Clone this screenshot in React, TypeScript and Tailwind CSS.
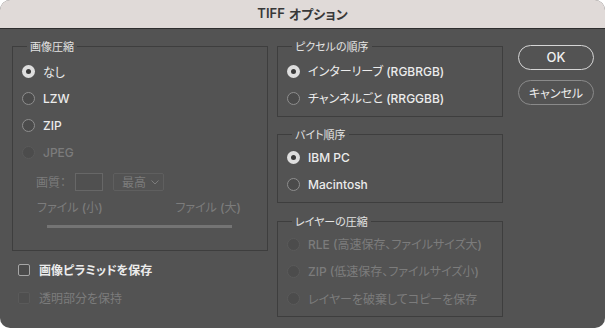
import React from "react";

type RadioState = "on" | "off" | "disabled";

// Latin runs are set in Inter medium, Japanese runs in Noto Sans CJK JP with proportional kana
function Label({ text, className }: { text: string; className?: string }) {
  const parts = text.split(/([A-Za-z0-9 ()]+)/).filter((p) => p !== "");
  return (
    <span className={"whitespace-nowrap " + (className ?? "")}>
      {parts.map((p, i) =>
        /^[A-Za-z0-9 ()]+$/.test(p) ? (
          <span key={i} className="font-['Inter',sans-serif] text-[12px] font-medium">
            {p}
          </span>
        ) : (
          <span key={i}>{p}</span>
        )
      )}
    </span>
  );
}

function Radio({ state, label }: { state: RadioState; label: string }) {
  return (
    <div className="flex h-[27px] items-center gap-[8px]">
      {state === "on" && (
        <span className="flex h-[13px] w-[13px] shrink-0 items-center justify-center rounded-full bg-[#dedede]">
          <span className="h-[5px] w-[5px] rounded-full bg-[#3a3a3a]" />
        </span>
      )}
      {state === "off" && (
        <span className="h-[13px] w-[13px] shrink-0 rounded-full border border-[#8e8e8e] bg-[#4b4b4b]" />
      )}
      {state === "disabled" && (
        <span className="h-[13px] w-[13px] shrink-0 rounded-full border border-[#5a5a5a] bg-[#4c4c4c]" />
      )}
      <Label text={label} className={state === "disabled" ? "text-[#7c7c7c]" : "text-[#ececec]"} />
    </div>
  );
}

function Group({ title, className, children }: { title: string; className: string; children: React.ReactNode }) {
  return (
    <fieldset className={"border border-[#3e3e3e] px-[9px] " + className}>
      <legend className="ml-[5px] px-[3px] text-[11px] leading-4 text-[#e2e2e2]">{title}</legend>
      {children}
    </fieldset>
  );
}

export default function App() {
  return (
    <div className="h-[328px] w-[605px] bg-white font-['Noto_Sans_CJK_JP',sans-serif] text-[12px] [font-feature-settings:'palt']">
      <div className="flex h-full flex-col overflow-hidden rounded-[10px] bg-[#535353]">
        <div className="flex h-[29px] items-center justify-center border-b border-[#2e2e2e] bg-[#e0dad8] text-[13px] font-bold text-[#383838]">
          <span className="font-['Inter',sans-serif] font-semibold">TIFF</span>
          <span className="ml-[4px]">オプション</span>
        </div>
        <div className="flex pl-[12px] pt-[9px]">
          {/* left column */}
          <div className="flex w-[256px] flex-col">
            <Group title="画像圧縮" className="h-[213px]">
              <div className="flex flex-col pt-[4px]">
                <Radio state="on" label="なし" />
                <Radio state="off" label="LZW" />
                <Radio state="off" label="ZIP" />
                <Radio state="disabled" label="JPEG" />
              </div>
              <div className="mt-[7px] flex h-[18px] items-center pl-[14px] text-[#7c7c7c]">
                <span className="w-[39px] whitespace-nowrap">画質：</span>
                <span className="h-[18px] w-[28px] border border-[#676767] bg-[#505050]" />
                <span className="ml-[10px] flex h-[18px] w-[51px] items-center justify-between rounded-[2px] border border-[#5f5f5f] pl-[8px] pr-[4px]">
                  最高
                  <svg width="8" height="5" viewBox="0 0 8 5" fill="none">
                    <path d="M0.5 0.5 L4 4 L7.5 0.5" stroke="#7c7c7c" strokeWidth="1" />
                  </svg>
                </span>
              </div>
              <div className="mt-[8px] flex h-[16px] items-center justify-between pl-[15px] pr-[17px] text-[#7c7c7c]">
                <Label text="ファイル (小)" />
                <Label text="ファイル (大)" />
              </div>
              <div className="ml-[25px] mt-[10px] h-[3px] w-[185px] bg-[#747474]" />
            </Group>
            <div className="mt-[12px] flex h-[14px] items-center gap-[9px] pl-[6px]">
              <span className="h-[12px] w-[12px] rounded-[2px] border border-[#a6a6a6] bg-[#4b4b4b]" />
              <span className="font-bold text-[#ececec]">画像ピラミッドを保存</span>
            </div>
            <div className="mt-[14px] flex h-[14px] items-center gap-[9px] pl-[6px]">
              <span className="h-[12px] w-[12px] rounded-[2px] border border-[#5a5a5a] bg-[#4f4f4f]" />
              <span className="text-[#7c7c7c]">透明部分を保持</span>
            </div>
          </div>

          {/* middle column */}
          <div className="ml-[9px] flex w-[226px] flex-col">
            <Group title="ピクセルの順序" className="h-[79px]">
              <div className="flex flex-col pt-[4px]">
                <Radio state="on" label="インターリーブ (RGBRGB)" />
                <Radio state="off" label="チャンネルごと (RRGGBB)" />
              </div>
            </Group>
            <Group title="バイト順序" className="mt-[9px] h-[77px]">
              <div className="flex flex-col pt-[2px]">
                <Radio state="on" label="IBM PC" />
                <Radio state="off" label="Macintosh" />
              </div>
            </Group>
            <Group title="レイヤーの圧縮" className="mt-[10px] h-[104px]">
              <div className="flex flex-col pt-[2px]">
                <Radio state="disabled" label="RLE (高速保存、ファイルサイズ大)" />
                <Radio state="disabled" label="ZIP (低速保存、ファイルサイズ小)" />
                <Radio state="disabled" label="レイヤーを破棄してコピーを保存" />
              </div>
            </Group>
          </div>

          {/* buttons */}
          <div className="ml-[15px] flex w-[76px] flex-col gap-[10px] pt-[7px]">
            <button className="h-[25px] rounded-full border border-[#d6d6d6] font-['Inter',sans-serif] text-[13px] font-medium text-[#f0f0f0]">
              OK
            </button>
            <button className="h-[25px] rounded-full border border-[#8a8a8a] text-[12px] text-[#ececec]">キャンセル</button>
          </div>
        </div>
      </div>
    </div>
  );
}
